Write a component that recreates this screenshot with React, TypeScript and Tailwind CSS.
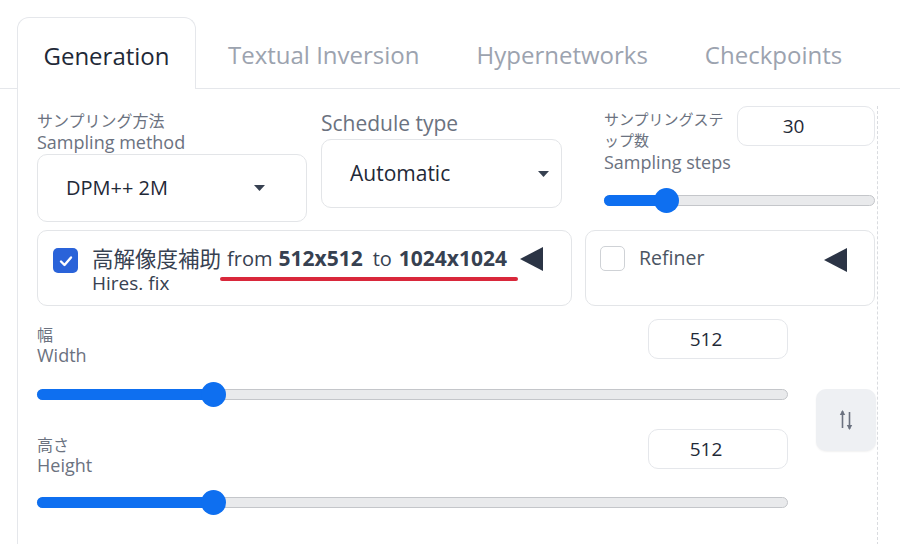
import type { ReactNode } from 'react'

const FONT = "font-['Open_Sans','Noto_Sans_CJK_JP',sans-serif]"

function Caret() {
  return (
    <svg width="11" height="6" viewBox="0 0 11 6" className="shrink-0">
      <polygon points="0,0 11,0 5.5,6" fill="#374151" />
    </svg>
  )
}

function LeftTriangle() {
  return (
    <svg width="23" height="24" viewBox="0 0 23 24" className="shrink-0">
      <polygon points="0,12 23,0 23,24" fill="#2b3445" />
    </svg>
  )
}

function Slider({ track, fill, thumb }: { track: string; fill: string; thumb: string }) {
  return (
    <div className={`relative h-[26px] flex items-center ${track}`}>
      <div className="h-[11px] w-full rounded-full bg-[#e9eaec] border-[1.5px] border-[#c4c6ca]" />
      <div className={`absolute left-0 h-[11px] rounded-full bg-[#0e6ff0] ${fill}`} />
      <div className={`absolute h-[25px] w-[25px] rounded-full bg-[#0e6ff0] ${thumb}`} />
    </div>
  )
}

function NumberBox({ value, className }: { value: string; className: string }) {
  return (
    <div className={`flex items-center justify-center rounded-[10px] border border-[#e5e7eb] text-[19px] text-[#1f2937] ${className}`}>
      {value}
    </div>
  )
}

function Box({ children, className }: { children: ReactNode; className: string }) {
  return <div className={`rounded-[10px] border border-[#e3e5e8] ${className}`}>{children}</div>
}

export default function App() {
  return (
    <div className={`relative w-[900px] h-[544px] overflow-hidden bg-white ${FONT}`}>
      {/* Tabs */}
      <div className="flex items-end pt-[17px] pl-[17px] border-b border-[#e5e7eb]">
        <div className="-mb-px flex h-[72px] w-[179px] items-center justify-center rounded-t-[12px] border border-b-0 border-[#e5e7eb] bg-white pt-[4px] text-[24px] text-[#1f2937]">
          Generation
        </div>
        <div className="flex h-[71px] items-center pt-[4px] text-[24px] text-[#9ca3af]">
          <span className="ml-[32px]">Textual Inversion</span>
          <span className="ml-[57px]">Hypernetworks</span>
          <span className="ml-[57px]">Checkpoints</span>
        </div>
      </div>

      {/* Panel */}
      <div className="ml-[17px] flex h-[456px] border-l border-[#e5e7eb]">
        <div className="w-[859px] pl-[19px] pt-[17px]">
          {/* Row 1 */}
          <div className="flex h-[115px]">
            <div className="w-[270px] pt-[4px] text-[#6b7280]">
              <div className="text-[16px] leading-[22px]">サンプリング方法</div>
              <div className="text-[18px] leading-[20px]">Sampling method</div>
              <Box className="mt-[2px] flex h-[68px] items-center justify-between pl-[28px] pr-[41px]">
                <span className="text-[20px] text-[#1f2937]">DPM++ 2M</span>
                <Caret />
              </Box>
            </div>
            <div className="ml-[14px] w-[241px] pt-[4px]">
              <div className="text-[21px] leading-[26px] text-[#6b7280]">Schedule type</div>
              <Box className="mt-[3px] flex h-[69px] items-center justify-between pl-[28px] pr-[12px]">
                <span className="text-[21px] text-[#1f2937]">Automatic</span>
                <Caret />
              </Box>
            </div>
            <div className="ml-[42px] w-[271px]">
              <div className="flex justify-between">
                <div className="pt-[3px] text-[#6b7280]">
                  <div className="whitespace-nowrap text-[15px] leading-[21px]">サンプリングステ</div>
                  <div className="text-[15px] leading-[20px]">ップ数</div>
                  <div className="text-[18px] leading-[24px]">Sampling steps</div>
                </div>
                <NumberBox value="30" className="h-[40px] w-[138px] pr-[25px]" />
              </div>
              <Slider track="mt-[13px] w-[271px]" fill="w-[62px]" thumb="left-[50px]" />
            </div>
          </div>

          {/* Row 2 */}
          <div className="mt-[9px] flex gap-[13px]">
            <Box className="relative flex h-[76px] w-[535px] items-start pl-[15px] pt-[14px]">
              <div className="mt-[3px] flex h-[25px] w-[25px] items-center justify-center rounded-[5px] bg-[#2a63d9]">
                <svg width="14" height="12" viewBox="0 0 14 12">
                  <path d="M2 6.5 L5.5 10 L12 2.5" fill="none" stroke="white" strokeWidth="2.4" strokeLinecap="round" strokeLinejoin="round" />
                </svg>
              </div>
              <div className="ml-[14px] text-[#374151]">
                <div className="flex h-[28px] items-center text-[20px]">
                  <span className="text-[21.5px]">高解像度補助</span>
                  <span className="ml-[6px]">from</span>
                  <span className="ml-[6px] text-[21px] font-bold">512x512</span>
                  <span className="ml-[10px]">to</span>
                  <span className="ml-[7px] text-[21px] font-bold">1024x1024</span>
                  <span className="ml-[13px]">
                    <LeftTriangle />
                  </span>
                </div>
                <div className="text-[19px] leading-[20px]">Hires. fix</div>
              </div>
              {/* red annotation underline */}
              <div className="absolute left-[182px] top-[46px] h-[4px] w-[298px] rounded-full bg-[#d9283b]" />
            </Box>
            <Box className="flex h-[76px] w-[290px] items-start pl-[14px] pr-[27px] pt-[15px]">
              <div className="h-[25px] w-[25px] rounded-[5px] border border-[#cfd2d6] bg-white" />
              <span className="ml-[14px] text-[19.5px] leading-[24px] text-[#4b5563]">Refiner</span>
              <span className="ml-auto mt-[2px]">
                <LeftTriangle />
              </span>
            </Box>
          </div>

          {/* Row 3 */}
          <div className="mt-[13px] flex">
            <div className="w-[751px]">
              <div className="flex justify-between">
                <div className="pt-[7px] text-[#6b7280]">
                  <div className="text-[16px] leading-[19px]">幅</div>
                  <div className="text-[18px] leading-[21px]">Width</div>
                </div>
                <NumberBox value="512" className="h-[40px] w-[140px] pr-[24px]" />
              </div>
              <Slider track="mt-[15px]" fill="w-[176px]" thumb="left-[164px]" />
              <div className="mt-[22px] flex justify-between">
                <div className="pt-[7px] text-[#6b7280]">
                  <div className="text-[16px] leading-[19px]">高さ</div>
                  <div className="text-[18px] leading-[21px]">Height</div>
                </div>
                <NumberBox value="512" className="h-[40px] w-[140px] pr-[24px]" />
              </div>
              <Slider track="mt-[13px]" fill="w-[176px]" thumb="left-[164px]" />
            </div>
            <div className="ml-[28px] pt-[70px]">
              <div className="flex h-[62px] w-[60px] items-center justify-center rounded-[10px] bg-[#eef0f3] shadow-[0_1px_2px_rgba(0,0,0,0.06)]">
                <svg width="16" height="24" viewBox="0 0 16 24">
                  <path d="M4.5 3 V20" stroke="#6b7280" strokeWidth="1.6" />
                  <polygon points="1.8,7 4.5,2 7.2,7" fill="#6b7280" />
                  <path d="M11.5 4 V21" stroke="#6b7280" strokeWidth="1.6" />
                  <polygon points="8.8,17 11.5,22 14.2,17" fill="#6b7280" />
                </svg>
              </div>
            </div>
          </div>
        </div>
        <div className="mt-[17px] w-0 border-r border-dashed border-[#d9dbdf]" />
      </div>
    </div>
  )
}
